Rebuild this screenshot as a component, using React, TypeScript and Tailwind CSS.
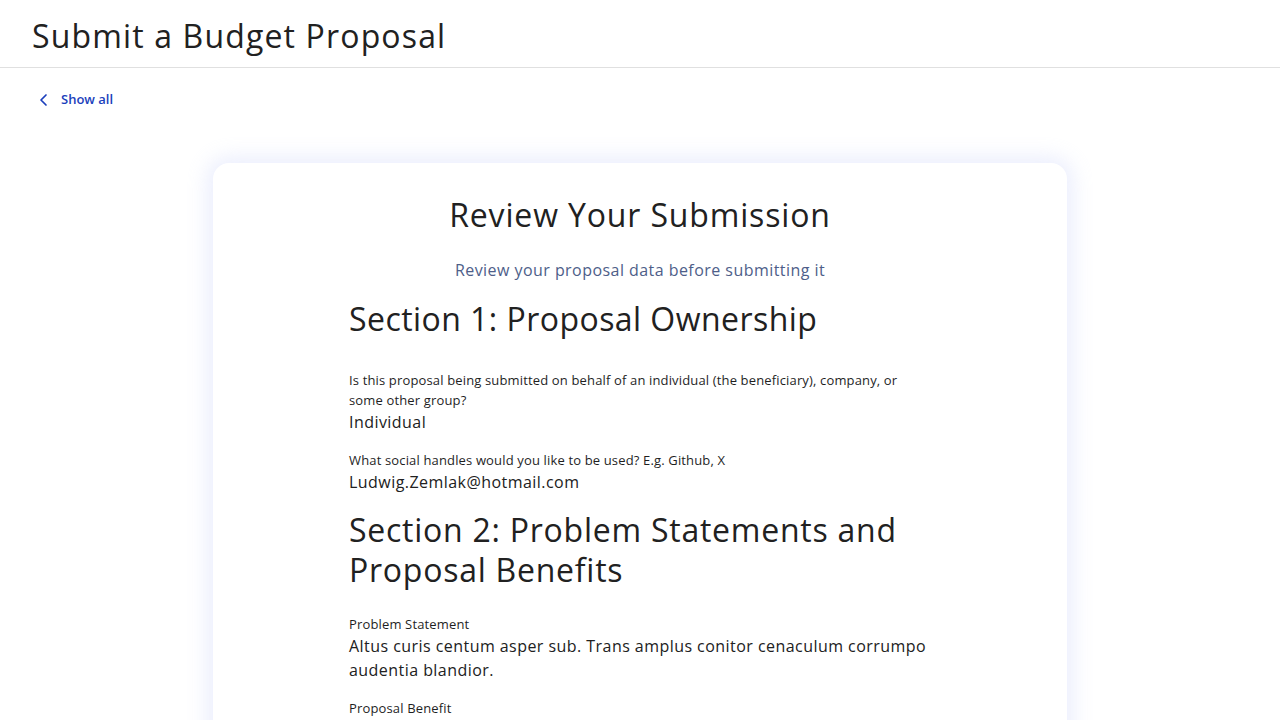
import { FC } from "react";

const font = { fontFamily: '"Open Sans", "Liberation Sans", sans-serif' };

const Field: FC<{ label: string; value: string }> = ({ label, value }) => (
  <div className="mb-4">
    <p className="text-[13px] leading-5 tracking-[0.15px] text-[#1f1f1f]">{label}</p>
    <p className="text-base leading-6 tracking-[0.45px] text-[#212121]">{value}</p>
  </div>
);

export default function App() {
  return (
    <div style={font} className="min-h-screen bg-white text-[#212121]">
      <header className="h-[68px] border-b border-[#e0e0e0] px-8 pt-[16px]">
        <h1 className="text-[32px] leading-10 font-normal tracking-[1.15px] text-[#212121]">Submit a Budget Proposal</h1>
      </header>

      <div className="px-8 pt-[21px]">
        <button className="flex items-center gap-[10px] text-[#1b3fbc] text-[13px] font-semibold leading-5 pl-[5px]">
          <svg width="14" height="14" viewBox="0 0 14 14" fill="none" className="mt-[2px]">
            <path d="M9 2 4 7l5 5" stroke="currentColor" strokeWidth="1.7" strokeLinecap="round" strokeLinejoin="round" />
          </svg>
          Show all
        </button>
      </div>

      <main className="flex justify-center pt-[54px]">
        <section className="w-[854px] rounded-2xl bg-white shadow-[0_0_20px_6px_rgba(210,218,250,0.45)] pt-[32px] pb-10">
          <h2 className="text-center text-[32px] leading-10 tracking-[0.85px] text-[#212121]">Review Your Submission</h2>
          <p className="text-center text-base leading-6 tracking-[0.45px] text-[#4e5e89] mt-[23px]">Review your proposal data before submitting it</p>

          <div className="mx-auto w-[582px] mt-[17px]">
            <h3 className="text-[32px] leading-10 tracking-[0.45px] text-[#212121] mb-[31px]">Section 1: Proposal Ownership</h3>
            <Field
              label="Is this proposal being submitted on behalf of an individual (the beneficiary), company, or some other group?"
              value="Individual"
            />
            <Field label="What social handles would you like to be used? E.g. Github, X" value="Ludwig.Zemlak@hotmail.com" />

            <h3 className="text-[32px] leading-10 tracking-[0.75px] text-[#212121] mb-6">Section 2: Problem Statements and Proposal Benefits</h3>
            <Field
              label="Problem Statement"
              value="Altus curis centum asper sub. Trans amplus conitor cenaculum corrumpo audentia blandior."
            />
            <Field label="Proposal Benefit" value="Vorago crapula tero adeptio. Ustilo tenax cunctatio." />
          </div>
        </section>
      </main>
    </div>
  );
}
